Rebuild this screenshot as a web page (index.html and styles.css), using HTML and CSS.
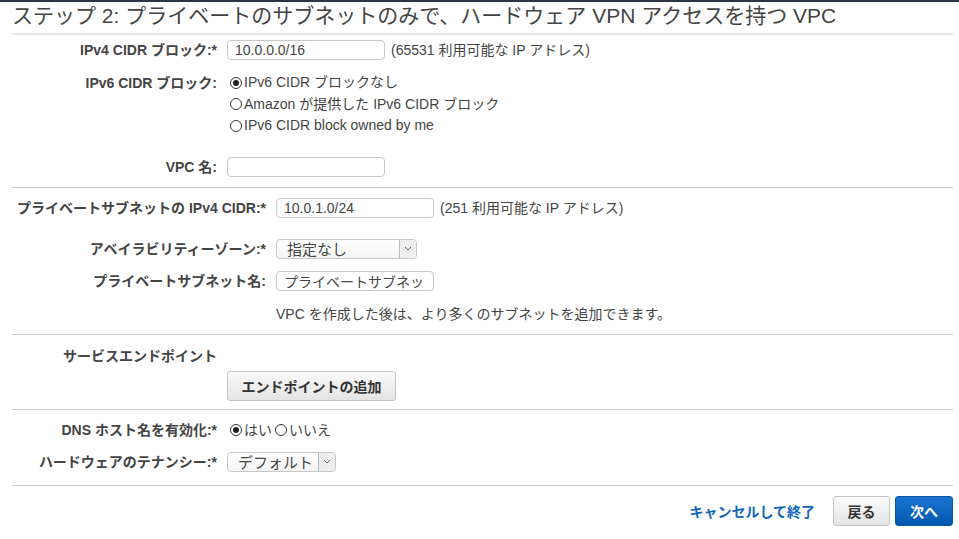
FILE: index.html
```html
<!DOCTYPE html>
<html lang="ja">
<head>
    <meta charset="UTF-8">
    <title>VPC ウィザード</title>
    <link rel="stylesheet" href="styles.css">
</head>
<body>
    <div class="topbar"></div>
    <div class="page">
        <h1 class="title">ステップ 2: プライベートのサブネットのみで、ハードウェア VPN アクセスを持つ VPC</h1>

        <div class="section s-vpc">
            <div class="row r-cidr">
                <div class="label">IPv4 CIDR ブロック:*</div>
                <div class="field">
                    <input class="text" type="text" value="10.0.0.0/16">
                    <span class="note">(65531 利用可能な IP アドレス)</span>
                </div>
            </div>
            <div class="row r-ipv6">
                <div class="label">IPv6 CIDR ブロック:</div>
                <div class="field radios">
                    <label class="radio"><span class="dot on"></span>IPv6 CIDR ブロックなし</label>
                    <label class="radio"><span class="dot"></span>Amazon が提供した IPv6 CIDR ブロック</label>
                    <label class="radio"><span class="dot"></span>IPv6 CIDR block owned by me</label>
                </div>
            </div>
            <div class="row r-name">
                <div class="label">VPC 名:</div>
                <div class="field">
                    <input class="text" type="text" value="">
                </div>
            </div>
        </div>

        <div class="section s-subnet">
            <div class="row r-cidr">
                <div class="label">プライベートサブネットの IPv4 CIDR:*</div>
                <div class="field">
                    <input class="text" type="text" value="10.0.1.0/24">
                    <span class="note">(251 利用可能な IP アドレス)</span>
                </div>
            </div>
            <div class="row r-az">
                <div class="label">アベイラビリティーゾーン:*</div>
                <div class="field">
                    <div class="select az"><span class="val">指定なし</span><span class="arrow"><svg width="8" height="5" viewBox="0 0 8 5"><path d="M1 1 L4 4 L7 1" fill="none" stroke="#666" stroke-width="1"/></svg></span></div>
                </div>
            </div>
            <div class="row r-sname">
                <div class="label">プライベートサブネット名:</div>
                <div class="field">
                    <input class="text" type="text" value="プライベートサブネット">
                </div>
            </div>
            <div class="row r-help">
                <div class="label"></div>
                <div class="field">VPC を作成した後は、より多くのサブネットを追加できます。</div>
            </div>
        </div>

        <div class="section s-endpoint">
            <div class="row r-eplabel">
                <div class="label">サービスエンドポイント</div>
            </div>
            <div class="row r-epbtn">
                <div class="label"></div>
                <div class="field"><button class="btn add">エンドポイントの追加</button></div>
            </div>
        </div>

        <div class="section s-dns">
            <div class="row r-dns">
                <div class="label">DNS ホスト名を有効化:*</div>
                <div class="field">
                    <label class="radio"><span class="dot on"></span>はい</label>
                    <label class="radio"><span class="dot"></span>いいえ</label>
                </div>
            </div>
            <div class="row r-ten">
                <div class="label">ハードウェアのテナンシー:*</div>
                <div class="field">
                    <div class="select ten"><span class="val">デフォルト</span><span class="arrow"><svg width="8" height="5" viewBox="0 0 8 5"><path d="M1 1 L4 4 L7 1" fill="none" stroke="#666" stroke-width="1"/></svg></span></div>
                </div>
            </div>
        </div>

        <div class="footer">
            <a class="cancel" href="#">キャンセルして終了</a>
            <button class="btn back">戻る</button>
            <button class="btn next">次へ</button>
        </div>
    </div>
</body>
</html>
```

FILE: styles.css
```css
body {
    margin: 0;
    font-family: "Liberation Sans", Arial, "Noto Sans CJK JP", sans-serif;
    font-size: 14px;
    color: #444;
    background: #fff;
}
.topbar {
    height: 2px;
    background: #2b3440;
}
.page {
    padding: 0 6px 0 12px;
}
.title {
    margin: 0;
    font-size: 21px;
    font-weight: normal;
    color: #444;
    line-height: 26px;
    height: 26px;
    padding-top: 1px;
    padding-bottom: 4px;
    border-bottom: 2px solid #e4e4e4;
    white-space: nowrap;
}
.section {
    border-bottom: 1px solid #ccc;
}
.row {
    display: flex;
    align-items: center;
    height: 20px;
    line-height: 20px;
}
.label {
    width: 205px;
    flex: none;
    text-align: right;
    font-weight: bold;
    padding-right: 10px;
    white-space: nowrap;
}
.s-subnet .label {
    width: 254px;
}
.field {
    display: flex;
    align-items: center;
    white-space: nowrap;
}
.text {
    box-sizing: border-box;
    width: 158px;
    height: 20px;
    border: 1px solid #c8c8c8;
    border-radius: 4px;
    padding: 0 7px;
    font: 14px "Liberation Sans", Arial, "Noto Sans CJK JP", sans-serif;
    color: #444;
    margin: 0;
}
.note {
    margin-left: 6px;
}

/* vpc section */
.s-vpc {
    padding: 5px 0 10px;
}
.s-vpc .r-ipv6 {
    height: auto;
    align-items: flex-start;
    margin-top: 12px;
}
.s-vpc .r-ipv6 .label {
    line-height: 22px;
}
.radios {
    flex-direction: column;
    align-items: flex-start;
}
.radios .radio {
    line-height: 21.5px;
}
.radio {
    display: flex;
    align-items: center;
}
.dot {
    box-sizing: border-box;
    width: 12px;
    height: 12px;
    border: 1px solid #333;
    border-radius: 50%;
    margin: 0 2px 0 3px;
    position: relative;
}
.dot.on::after {
    content: "";
    position: absolute;
    left: 2px;
    top: 2px;
    width: 6px;
    height: 6px;
    border-radius: 50%;
    background: #222;
}
.s-vpc .r-name {
    margin-top: 20px;
}

/* subnet section */
.s-subnet {
    padding: 10px 0 10px;
}
.s-subnet .r-az {
    margin-top: 21px;
}
.s-subnet .r-sname {
    margin-top: 12px;
}
.s-subnet .r-help {
    margin-top: 13px;
}
.select {
    box-sizing: border-box;
    height: 20px;
    border: 1px solid #c8c8c8;
    border-radius: 4px;
    display: flex;
    align-items: center;
    justify-content: space-between;
    padding-left: 10px;
    background: linear-gradient(#fff, #f4f4f4);
}
.select.az {
    width: 141px;
}
.select.ten {
    width: 109px;
}
.select .val {
    font-size: 15px;
    line-height: 18px;
    padding-top: 3px;
}
.arrow {
    box-sizing: border-box;
    width: 17px;
    height: 18px;
    border-left: 1px solid #bbb;
    display: flex;
    align-items: center;
    justify-content: center;
    background: #eee;
    border-radius: 0 3px 3px 0;
}

/* endpoint section */
.s-endpoint {
    padding: 11px 0 8px;
}
.s-endpoint .r-epbtn {
    height: 30px;
    margin-top: 5px;
}
.btn {
    box-sizing: border-box;
    height: 30px;
    border: 1px solid #c4c4c4;
    border-radius: 3px;
    background: linear-gradient(#fafafa, #e4e4e4);
    font: bold 14px "Liberation Sans", Arial, "Noto Sans CJK JP", sans-serif;
    color: #333;
    padding: 0 8px;
    margin: 0;
}
.btn.add {
    width: 169px;
}

/* dns section */
.s-dns {
    padding: 10px 0 13px;
}
.s-dns .r-ten {
    margin-top: 12px;
}

/* footer */
.footer {
    display: flex;
    justify-content: flex-end;
    align-items: center;
    padding-top: 10px;
}
.cancel {
    color: #1166bb;
    font-weight: bold;
    text-decoration: none;
    margin-right: 18px;
}
.btn.back {
    width: 57px;
    margin-right: 5px;
}
.btn.next {
    width: 58px;
    background: linear-gradient(#1a74d0, #0058b0);
    border-color: #0a58a8;
    color: #fff;
}
```
